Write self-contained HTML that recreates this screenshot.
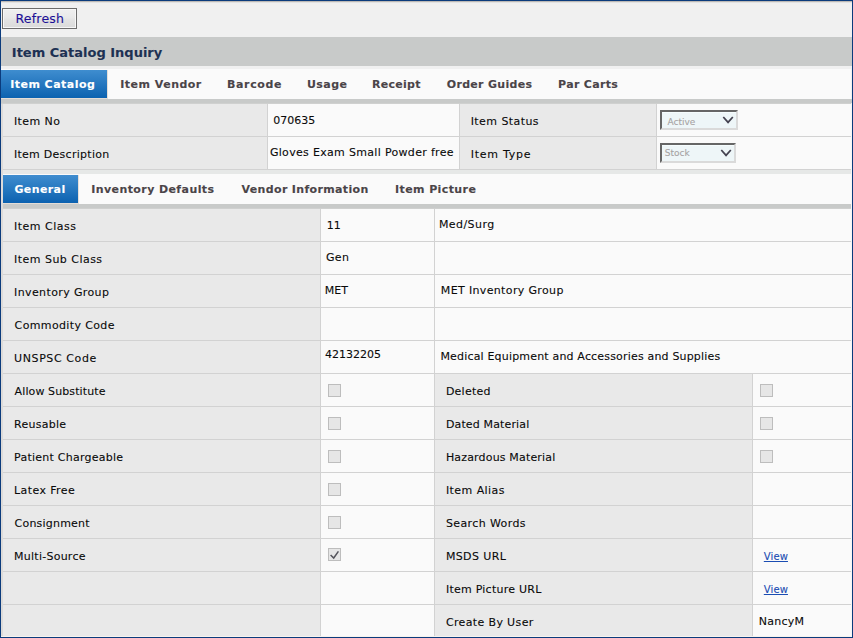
<!DOCTYPE html>
<html lang="en">
<head>
<meta charset="utf-8">
<title>Item Catalog Inquiry</title>
<style>
html,body{margin:0;padding:0}
body{width:853px;height:638px;position:relative;overflow:hidden;background:#f0f0f0;font-family:"DejaVu Sans","Liberation Sans",sans-serif;font-size:11px}
.r{position:absolute}
.t{position:absolute;white-space:nowrap;line-height:20px;height:20px;margin:0;padding:0;-webkit-text-stroke:0.1px}
.b{font-weight:bold}
a.t{text-decoration:underline}
</style>
</head>
<body>
<div class="r" style="left:0px;top:0px;width:853px;height:638px;background:#f0f0f0"></div>
<div class="r" style="left:1px;top:1px;width:851px;height:1px;background:#bdb9b5"></div>
<div class="r" style="left:1px;top:2px;width:851px;height:1px;background:#e2e2e2"></div>
<div class="r" style="left:1px;top:37px;width:851px;height:29px;background:#c8cac9"></div>
<div class="r" style="left:1px;top:66px;width:850px;height:3px;background:#f0f0f0"></div>
<div class="r" style="left:1px;top:69px;width:850px;height:30px;background:#fafafa"></div>
<div class="r" style="left:1px;top:70px;width:106px;height:28px;background:#2878c0;background:linear-gradient(#3f8dcf,#0c62b0)"></div>
<div class="r" style="left:107px;top:70px;width:1px;height:28px;background:#e6dfd8"></div>
<div class="r" style="left:1px;top:98px;width:107px;height:1px;background:#e3ddd7"></div>
<div class="r" style="left:1px;top:99px;width:851px;height:4px;background:#c8cac9"></div>
<div class="r" style="left:1px;top:103px;width:850px;height:1px;background:#cfd0cf"></div>
<div class="r" style="left:1px;top:104px;width:2px;height:533px;background:#dddbd9"></div>
<div class="r" style="left:3px;top:104px;width:848px;height:32px;background:#d2d2d2"></div>
<div class="r" style="left:3px;top:104px;width:264px;height:32px;background:#e9e9e9"></div>
<div class="r" style="left:268px;top:104px;width:191px;height:32px;background:#fafafa"></div>
<div class="r" style="left:460px;top:104px;width:196px;height:32px;background:#e9e9e9"></div>
<div class="r" style="left:657px;top:104px;width:194px;height:32px;background:#fafafa"></div>
<div class="r" style="left:3px;top:136px;width:848px;height:1px;background:#d2d2d2"></div>
<div class="r" style="left:3px;top:137px;width:848px;height:32px;background:#d2d2d2"></div>
<div class="r" style="left:3px;top:137px;width:264px;height:32px;background:#e9e9e9"></div>
<div class="r" style="left:268px;top:137px;width:191px;height:32px;background:#fafafa"></div>
<div class="r" style="left:460px;top:137px;width:196px;height:32px;background:#e9e9e9"></div>
<div class="r" style="left:657px;top:137px;width:194px;height:32px;background:#fafafa"></div>
<div class="r" style="left:3px;top:169px;width:848px;height:1px;background:#d2d2d2"></div>
<div class="r" style="left:3px;top:170px;width:848px;height:4px;background:#e6e8e7"></div>
<div class="r" style="left:3px;top:174px;width:848px;height:30px;background:#fafafa"></div>
<div class="r" style="left:3px;top:175px;width:75px;height:28px;background:#2878c0;background:linear-gradient(#3f8dcf,#0c62b0)"></div>
<div class="r" style="left:78px;top:175px;width:1px;height:28px;background:#e6dfd8"></div>
<div class="r" style="left:3px;top:203px;width:76px;height:1px;background:#e3ddd7"></div>
<div class="r" style="left:3px;top:204px;width:848px;height:4px;background:#c8cac9"></div>
<div class="r" style="left:3px;top:208px;width:848px;height:1px;background:#cfd0cf"></div>
<div class="r" style="left:3px;top:209px;width:848px;height:32px;background:#d2d2d2"></div>
<div class="r" style="left:3px;top:209px;width:317px;height:32px;background:#e9e9e9"></div>
<div class="r" style="left:321px;top:209px;width:113px;height:32px;background:#fafafa"></div>
<div class="r" style="left:435px;top:209px;width:416px;height:32px;background:#fafafa"></div>
<div class="r" style="left:3px;top:241px;width:848px;height:1px;background:#d2d2d2"></div>
<div class="r" style="left:3px;top:242px;width:848px;height:32px;background:#d2d2d2"></div>
<div class="r" style="left:3px;top:242px;width:317px;height:32px;background:#e9e9e9"></div>
<div class="r" style="left:321px;top:242px;width:113px;height:32px;background:#fafafa"></div>
<div class="r" style="left:435px;top:242px;width:416px;height:32px;background:#fafafa"></div>
<div class="r" style="left:3px;top:274px;width:848px;height:1px;background:#d2d2d2"></div>
<div class="r" style="left:3px;top:275px;width:848px;height:32px;background:#d2d2d2"></div>
<div class="r" style="left:3px;top:275px;width:317px;height:32px;background:#e9e9e9"></div>
<div class="r" style="left:321px;top:275px;width:113px;height:32px;background:#fafafa"></div>
<div class="r" style="left:435px;top:275px;width:416px;height:32px;background:#fafafa"></div>
<div class="r" style="left:3px;top:307px;width:848px;height:1px;background:#d2d2d2"></div>
<div class="r" style="left:3px;top:308px;width:848px;height:32px;background:#d2d2d2"></div>
<div class="r" style="left:3px;top:308px;width:317px;height:32px;background:#e9e9e9"></div>
<div class="r" style="left:321px;top:308px;width:113px;height:32px;background:#fafafa"></div>
<div class="r" style="left:435px;top:308px;width:416px;height:32px;background:#fafafa"></div>
<div class="r" style="left:3px;top:340px;width:848px;height:1px;background:#d2d2d2"></div>
<div class="r" style="left:3px;top:341px;width:848px;height:32px;background:#d2d2d2"></div>
<div class="r" style="left:3px;top:341px;width:317px;height:32px;background:#e9e9e9"></div>
<div class="r" style="left:321px;top:341px;width:113px;height:32px;background:#fafafa"></div>
<div class="r" style="left:435px;top:341px;width:416px;height:32px;background:#fafafa"></div>
<div class="r" style="left:3px;top:373px;width:848px;height:1px;background:#d2d2d2"></div>
<div class="r" style="left:3px;top:374px;width:848px;height:32px;background:#d2d2d2"></div>
<div class="r" style="left:3px;top:374px;width:317px;height:32px;background:#e9e9e9"></div>
<div class="r" style="left:321px;top:374px;width:113px;height:32px;background:#fafafa"></div>
<div class="r" style="left:435px;top:374px;width:317px;height:32px;background:#e9e9e9"></div>
<div class="r" style="left:753px;top:374px;width:98px;height:32px;background:#fafafa"></div>
<div class="r" style="left:3px;top:406px;width:848px;height:1px;background:#d2d2d2"></div>
<div class="r" style="left:3px;top:407px;width:848px;height:32px;background:#d2d2d2"></div>
<div class="r" style="left:3px;top:407px;width:317px;height:32px;background:#e9e9e9"></div>
<div class="r" style="left:321px;top:407px;width:113px;height:32px;background:#fafafa"></div>
<div class="r" style="left:435px;top:407px;width:317px;height:32px;background:#e9e9e9"></div>
<div class="r" style="left:753px;top:407px;width:98px;height:32px;background:#fafafa"></div>
<div class="r" style="left:3px;top:439px;width:848px;height:1px;background:#d2d2d2"></div>
<div class="r" style="left:3px;top:440px;width:848px;height:32px;background:#d2d2d2"></div>
<div class="r" style="left:3px;top:440px;width:317px;height:32px;background:#e9e9e9"></div>
<div class="r" style="left:321px;top:440px;width:113px;height:32px;background:#fafafa"></div>
<div class="r" style="left:435px;top:440px;width:317px;height:32px;background:#e9e9e9"></div>
<div class="r" style="left:753px;top:440px;width:98px;height:32px;background:#fafafa"></div>
<div class="r" style="left:3px;top:472px;width:848px;height:1px;background:#d2d2d2"></div>
<div class="r" style="left:3px;top:473px;width:848px;height:32px;background:#d2d2d2"></div>
<div class="r" style="left:3px;top:473px;width:317px;height:32px;background:#e9e9e9"></div>
<div class="r" style="left:321px;top:473px;width:113px;height:32px;background:#fafafa"></div>
<div class="r" style="left:435px;top:473px;width:317px;height:32px;background:#e9e9e9"></div>
<div class="r" style="left:753px;top:473px;width:98px;height:32px;background:#fafafa"></div>
<div class="r" style="left:3px;top:505px;width:848px;height:1px;background:#d2d2d2"></div>
<div class="r" style="left:3px;top:506px;width:848px;height:32px;background:#d2d2d2"></div>
<div class="r" style="left:3px;top:506px;width:317px;height:32px;background:#e9e9e9"></div>
<div class="r" style="left:321px;top:506px;width:113px;height:32px;background:#fafafa"></div>
<div class="r" style="left:435px;top:506px;width:317px;height:32px;background:#e9e9e9"></div>
<div class="r" style="left:753px;top:506px;width:98px;height:32px;background:#fafafa"></div>
<div class="r" style="left:3px;top:538px;width:848px;height:1px;background:#d2d2d2"></div>
<div class="r" style="left:3px;top:539px;width:848px;height:32px;background:#d2d2d2"></div>
<div class="r" style="left:3px;top:539px;width:317px;height:32px;background:#e9e9e9"></div>
<div class="r" style="left:321px;top:539px;width:113px;height:32px;background:#fafafa"></div>
<div class="r" style="left:435px;top:539px;width:317px;height:32px;background:#e9e9e9"></div>
<div class="r" style="left:753px;top:539px;width:98px;height:32px;background:#fafafa"></div>
<div class="r" style="left:3px;top:571px;width:848px;height:1px;background:#d2d2d2"></div>
<div class="r" style="left:3px;top:572px;width:848px;height:32px;background:#d2d2d2"></div>
<div class="r" style="left:3px;top:572px;width:317px;height:32px;background:#e9e9e9"></div>
<div class="r" style="left:321px;top:572px;width:113px;height:32px;background:#fafafa"></div>
<div class="r" style="left:435px;top:572px;width:317px;height:32px;background:#e9e9e9"></div>
<div class="r" style="left:753px;top:572px;width:98px;height:32px;background:#fafafa"></div>
<div class="r" style="left:3px;top:604px;width:848px;height:1px;background:#d2d2d2"></div>
<div class="r" style="left:3px;top:605px;width:848px;height:31px;background:#d2d2d2"></div>
<div class="r" style="left:3px;top:605px;width:317px;height:31px;background:#e9e9e9"></div>
<div class="r" style="left:321px;top:605px;width:113px;height:31px;background:#fafafa"></div>
<div class="r" style="left:435px;top:605px;width:317px;height:31px;background:#e9e9e9"></div>
<div class="r" style="left:753px;top:605px;width:98px;height:31px;background:#fafafa"></div>
<div class="r" style="left:1px;top:636px;width:850px;height:1px;background:#f8f3ee"></div>
<div class="r" style="left:851px;top:104px;width:1px;height:533px;background:#f6f6f6"></div>
<div class="r" style="left:0px;top:0px;width:853px;height:1px;background:#0b3b7c"></div>
<div class="r" style="left:0px;top:637px;width:853px;height:1px;background:#0b3b7c"></div>
<div class="r" style="left:0px;top:0px;width:1px;height:638px;background:#0b3b7c"></div>
<div class="r" style="left:852px;top:0px;width:1px;height:638px;background:#0b3b7c"></div>
<div class="r" style="left:2px;top:8px;width:75px;height:21px;box-sizing:border-box;border:1px solid #6c6c6c;background:linear-gradient(#f0f0f0,#e9e9e9 45%,#e2e2e2 60%,#dadada);box-shadow:inset 0 0 0 1px #f7f7f7"></div>
<div class="r" style="left:660px;top:110px;width:78px;height:20px;box-sizing:border-box;border-style:solid;border-width:2px;border-color:#666666 #dadada #dadada #666666;background:#eef6f8;box-shadow:inset 0 1px 0 #f6fdfe"></div>
<svg class="r" style="left:722.0px;top:115.0px" width="13" height="10" viewBox="0 0 13 10"><path d="M1.3 2 L6.05 7.4 L10.8 2" fill="none" stroke="#444250" stroke-width="1.75"/></svg>
<div class="r" style="left:660px;top:143px;width:76px;height:20px;box-sizing:border-box;border-style:solid;border-width:2px;border-color:#666666 #dadada #dadada #666666;background:#eef6f8;box-shadow:inset 0 1px 0 #f6fdfe"></div>
<svg class="r" style="left:719.9px;top:148.0px" width="13" height="10" viewBox="0 0 13 10"><path d="M1.3 2 L6.05 7.4 L10.8 2" fill="none" stroke="#444250" stroke-width="1.75"/></svg>
<div class="r" style="left:328px;top:384px;width:11px;height:11px;border:1px solid #bdbdbd;background:#e6e6e6"></div>
<div class="r" style="left:328px;top:417px;width:11px;height:11px;border:1px solid #bdbdbd;background:#e6e6e6"></div>
<div class="r" style="left:328px;top:450px;width:11px;height:11px;border:1px solid #bdbdbd;background:#e6e6e6"></div>
<div class="r" style="left:328px;top:483px;width:11px;height:11px;border:1px solid #bdbdbd;background:#e6e6e6"></div>
<div class="r" style="left:328px;top:516px;width:11px;height:11px;border:1px solid #bdbdbd;background:#e6e6e6"></div>
<div class="r" style="left:328px;top:548px;width:11px;height:11px;border:1px solid #bdbdbd;background:#e6e6e6"></div>
<svg class="r" style="left:328px;top:548px" width="13" height="13" viewBox="0 0 13 13"><path d="M2.6 7.0 L5.7 10.0 L10.4 3.4" fill="none" stroke="#54545c" stroke-width="1.5"/></svg>
<div class="r" style="left:760px;top:384px;width:11px;height:11px;border:1px solid #bdbdbd;background:#e6e6e6"></div>
<div class="r" style="left:760px;top:417px;width:11px;height:11px;border:1px solid #bdbdbd;background:#e6e6e6"></div>
<div class="r" style="left:760px;top:450px;width:11px;height:11px;border:1px solid #bdbdbd;background:#e6e6e6"></div>
<span id="refresh" class="t" style="left:15.40px;top:9.01px;font-size:12.5px;color:#1d0f96;letter-spacing:0.240px">Refresh</span>
<span id="title" class="t b" style="left:11.80px;top:43.00px;font-size:13px;color:#1d3153">Item Catalog Inquiry</span>
<span id="tab1" class="t b" style="left:10.20px;top:75.00px;font-size:11px;color:#ffffff;letter-spacing:0.465px">Item Catalog</span>
<span id="tab2" class="t b" style="left:120.30px;top:75.00px;font-size:11px;color:#4a4448;letter-spacing:0.480px">Item Vendor</span>
<span id="tab3" class="t b" style="left:227.00px;top:75.00px;font-size:11px;color:#4a4448;letter-spacing:0.640px">Barcode</span>
<span id="tab4" class="t b" style="left:306.90px;top:75.00px;font-size:11px;color:#4a4448;letter-spacing:0.480px">Usage</span>
<span id="tab5" class="t b" style="left:372.10px;top:75.00px;font-size:11px;color:#4a4448;letter-spacing:0.267px">Receipt</span>
<span id="tab6" class="t b" style="left:446.80px;top:75.00px;font-size:11px;color:#4a4448;letter-spacing:0.298px">Order Guides</span>
<span id="tab7" class="t b" style="left:558.10px;top:75.00px;font-size:11px;color:#4a4448;letter-spacing:0.320px">Par Carts</span>
<span id="l_itemno" class="t" style="left:13.90px;top:112.00px;font-size:11px;color:#0a0a0a;letter-spacing:0.427px">Item No</span>
<span id="l_itemdesc" class="t" style="left:13.90px;top:145.00px;font-size:11px;color:#0a0a0a;letter-spacing:0.278px">Item Description</span>
<span id="v_itemno" class="t" style="left:273.20px;top:111.00px;font-size:11px;color:#0a0a0a">070635</span>
<span id="v_itemdesc" class="t" style="left:269.90px;top:143.00px;font-size:11px;color:#0a0a0a;letter-spacing:0.320px">Gloves Exam Small Powder free</span>
<span id="l_status" class="t" style="left:470.70px;top:112.00px;font-size:11px;color:#0a0a0a;letter-spacing:0.432px">Item Status</span>
<span id="l_type" class="t" style="left:470.70px;top:145.00px;font-size:11px;color:#0a0a0a;letter-spacing:0.740px">Item Type</span>
<span id="sel1" class="t" style="left:667.52px;top:112.01px;font-size:9px;color:#a6a3a3">Active</span>
<span id="sel2" class="t" style="left:664.80px;top:143.01px;font-size:9px;color:#a6a3a3">Stock</span>
<span id="stab1" class="t b" style="left:14.40px;top:180.00px;font-size:11px;color:#ffffff;letter-spacing:0.400px">General</span>
<span id="stab2" class="t b" style="left:91.30px;top:180.00px;font-size:11px;color:#4a4448;letter-spacing:0.405px">Inventory Defaults</span>
<span id="stab3" class="t b" style="left:241.52px;top:180.00px;font-size:11px;color:#4a4448;letter-spacing:0.348px">Vendor Information</span>
<span id="stab4" class="t b" style="left:395.10px;top:180.00px;font-size:11px;color:#4a4448;letter-spacing:0.392px">Item Picture</span>
<span id="ll0" class="t" style="left:14.10px;top:217.00px;font-size:11px;color:#0a0a0a;letter-spacing:0.480px">Item Class</span>
<span id="ll1" class="t" style="left:14.10px;top:250.00px;font-size:11px;color:#0a0a0a;letter-spacing:0.468px">Item Sub Class</span>
<span id="ll2" class="t" style="left:14.10px;top:283.00px;font-size:11px;color:#0a0a0a;letter-spacing:0.377px">Inventory Group</span>
<span id="ll3" class="t" style="left:14.60px;top:316.00px;font-size:11px;color:#0a0a0a;letter-spacing:0.370px">Commodity Code</span>
<span id="ll4" class="t" style="left:14.10px;top:349.00px;font-size:11px;color:#0a0a0a;letter-spacing:0.592px">UNSPSC Code</span>
<span id="ll5" class="t" style="left:14.60px;top:382.00px;font-size:11px;color:#0a0a0a;letter-spacing:0.107px">Allow Substitute</span>
<span id="ll6" class="t" style="left:14.10px;top:415.00px;font-size:11px;color:#0a0a0a;letter-spacing:0.240px">Reusable</span>
<span id="ll7" class="t" style="left:14.10px;top:448.00px;font-size:11px;color:#0a0a0a;letter-spacing:0.245px">Patient Chargeable</span>
<span id="ll8" class="t" style="left:14.10px;top:481.00px;font-size:11px;color:#0a0a0a;letter-spacing:0.391px">Latex Free</span>
<span id="ll9" class="t" style="left:14.60px;top:514.00px;font-size:11px;color:#0a0a0a;letter-spacing:0.208px">Consignment</span>
<span id="ll10" class="t" style="left:14.10px;top:547.00px;font-size:11px;color:#0a0a0a;letter-spacing:0.247px">Multi-Source</span>
<span id="rl0" class="t" style="left:445.90px;top:382.00px;font-size:11px;color:#0a0a0a;letter-spacing:0.240px">Deleted</span>
<span id="rl1" class="t" style="left:445.90px;top:415.00px;font-size:11px;color:#0a0a0a;letter-spacing:0.142px">Dated Material</span>
<span id="rl2" class="t" style="left:445.90px;top:448.00px;font-size:11px;color:#0a0a0a;letter-spacing:0.169px">Hazardous Material</span>
<span id="rl3" class="t" style="left:445.90px;top:481.00px;font-size:11px;color:#0a0a0a;letter-spacing:0.444px">Item Alias</span>
<span id="rl4" class="t" style="left:445.90px;top:514.00px;font-size:11px;color:#0a0a0a;letter-spacing:0.400px">Search Words</span>
<span id="rl5" class="t" style="left:445.90px;top:547.00px;font-size:11px;color:#0a0a0a;letter-spacing:0.380px">MSDS URL</span>
<span id="rl6" class="t" style="left:445.90px;top:580.00px;font-size:11px;color:#0a0a0a;letter-spacing:0.246px">Item Picture URL</span>
<span id="rl7" class="t" style="left:445.90px;top:613.00px;font-size:11px;color:#0a0a0a;letter-spacing:0.363px">Create By User</span>
<span id="v_class" class="t" style="left:326.80px;top:216.00px;font-size:11px;color:#0a0a0a">11</span>
<span id="v_classd" class="t" style="left:438.90px;top:215.00px;font-size:11px;color:#0a0a0a;letter-spacing:0.434px">Med/Surg</span>
<span id="v_sub" class="t" style="left:325.90px;top:248.00px;font-size:11px;color:#0a0a0a;letter-spacing:0.440px">Gen</span>
<span id="v_grp" class="t" style="left:324.70px;top:281.00px;font-size:11px;color:#0a0a0a">MET</span>
<span id="v_grpd" class="t" style="left:440.80px;top:281.00px;font-size:11px;color:#0a0a0a;letter-spacing:0.356px">MET Inventory Group</span>
<span id="v_un" class="t" style="left:324.90px;top:345.00px;font-size:11px;color:#0a0a0a">42132205</span>
<span id="v_und" class="t" style="left:440.40px;top:347.00px;font-size:11px;color:#0a0a0a;letter-spacing:0.179px">Medical Equipment and Accessories and Supplies</span>
<a href="#" id="view1" class="t" style="left:763.80px;top:547.01px;font-size:10px;color:#1b4db3;letter-spacing:0.107px;text-decoration:underline">View</a>
<a href="#" id="view2" class="t" style="left:763.80px;top:580.01px;font-size:10px;color:#1b4db3;letter-spacing:0.107px;text-decoration:underline">View</a>
<span id="nancy" class="t" style="left:758.70px;top:612.00px;font-size:11px;color:#0a0a0a;letter-spacing:0.256px">NancyM</span>
</body>
</html>
